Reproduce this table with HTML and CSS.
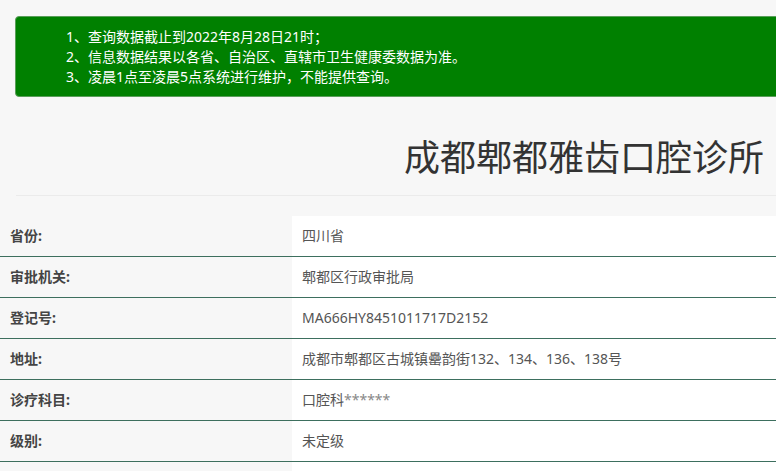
FILE: index.html
```html
<!DOCTYPE html>
<html lang="zh-CN">
<head>
<meta charset="utf-8">
<title>成都郫都雅齿口腔诊所</title>
<link rel="stylesheet" href="styles.css">
</head>
<body>
<div class="notice">
  <p>1、查询数据截止到2022年8月28日21时；</p>
  <p>2、信息数据结果以各省、自治区、直辖市卫生健康委数据为准。</p>
  <p>3、凌晨1点至凌晨5点系统进行维护，不能提供查询。</p>
</div>
<div class="header">
  <h1 class="title">成都郫都雅齿口腔诊所</h1>
</div>
<div class="info">
  <div class="row"><div class="label">省份:</div><div class="value">四川省</div></div>
  <div class="row"><div class="label">审批机关:</div><div class="value">郫都区行政审批局</div></div>
  <div class="row"><div class="label">登记号:</div><div class="value">MA666HY8451011717D2152</div></div>
  <div class="row"><div class="label">地址:</div><div class="value">成都市郫都区古城镇罍韵街132、134、136、138号</div></div>
  <div class="row"><div class="label">诊疗科目:</div><div class="value">口腔科<span class="stars">******</span></div></div>
  <div class="row"><div class="label">级别:</div><div class="value">未定级</div></div>
  <div class="row"><div class="label">有效期:</div><div class="value">2022-08-28</div></div>
</div>
</body>
</html>
```

FILE: styles.css
```css
html, body {
  margin: 0;
  padding: 0;
}
body {
  background: #f7f7f7;
  font-family: "Noto Sans", "Noto Sans CJK SC", sans-serif;
  color: #333;
  overflow-x: hidden;
}
.notice {
  margin: 16px -20px 0 15px;
  padding: 10px 0 9px 50px;
  background: #008000;
  border: 1px solid #5a9e5a;
  border-radius: 4px;
  color: #fff;
  font-size: 14px;
}
.notice p {
  margin: 0;
  line-height: 20px;
}
.header {
  margin-left: 16px;
  border-bottom: 1px solid #ebebeb;
}
.title {
  margin: 36px 0 0;
  padding: 0 12px 12px 0;
  text-align: right;
  font-size: 36px;
  line-height: 50px;
  font-weight: 400;
  color: #333;
}
.info {
  margin-top: 20px;
}
.row {
  display: flex;
  border-bottom: 1px solid #3d6f5e;
}
.label {
  width: 282px;
  flex: none;
  padding-left: 10px;
  height: 40px;
  line-height: 40px;
  font-size: 14px;
  font-weight: 700;
  color: #444;
}
.value {
  flex: 1;
  background: #fff;
  padding-left: 10px;
  height: 40px;
  line-height: 40px;
  font-size: 14px;
  color: #555;
}
.stars {
  color: #888;
}
```
